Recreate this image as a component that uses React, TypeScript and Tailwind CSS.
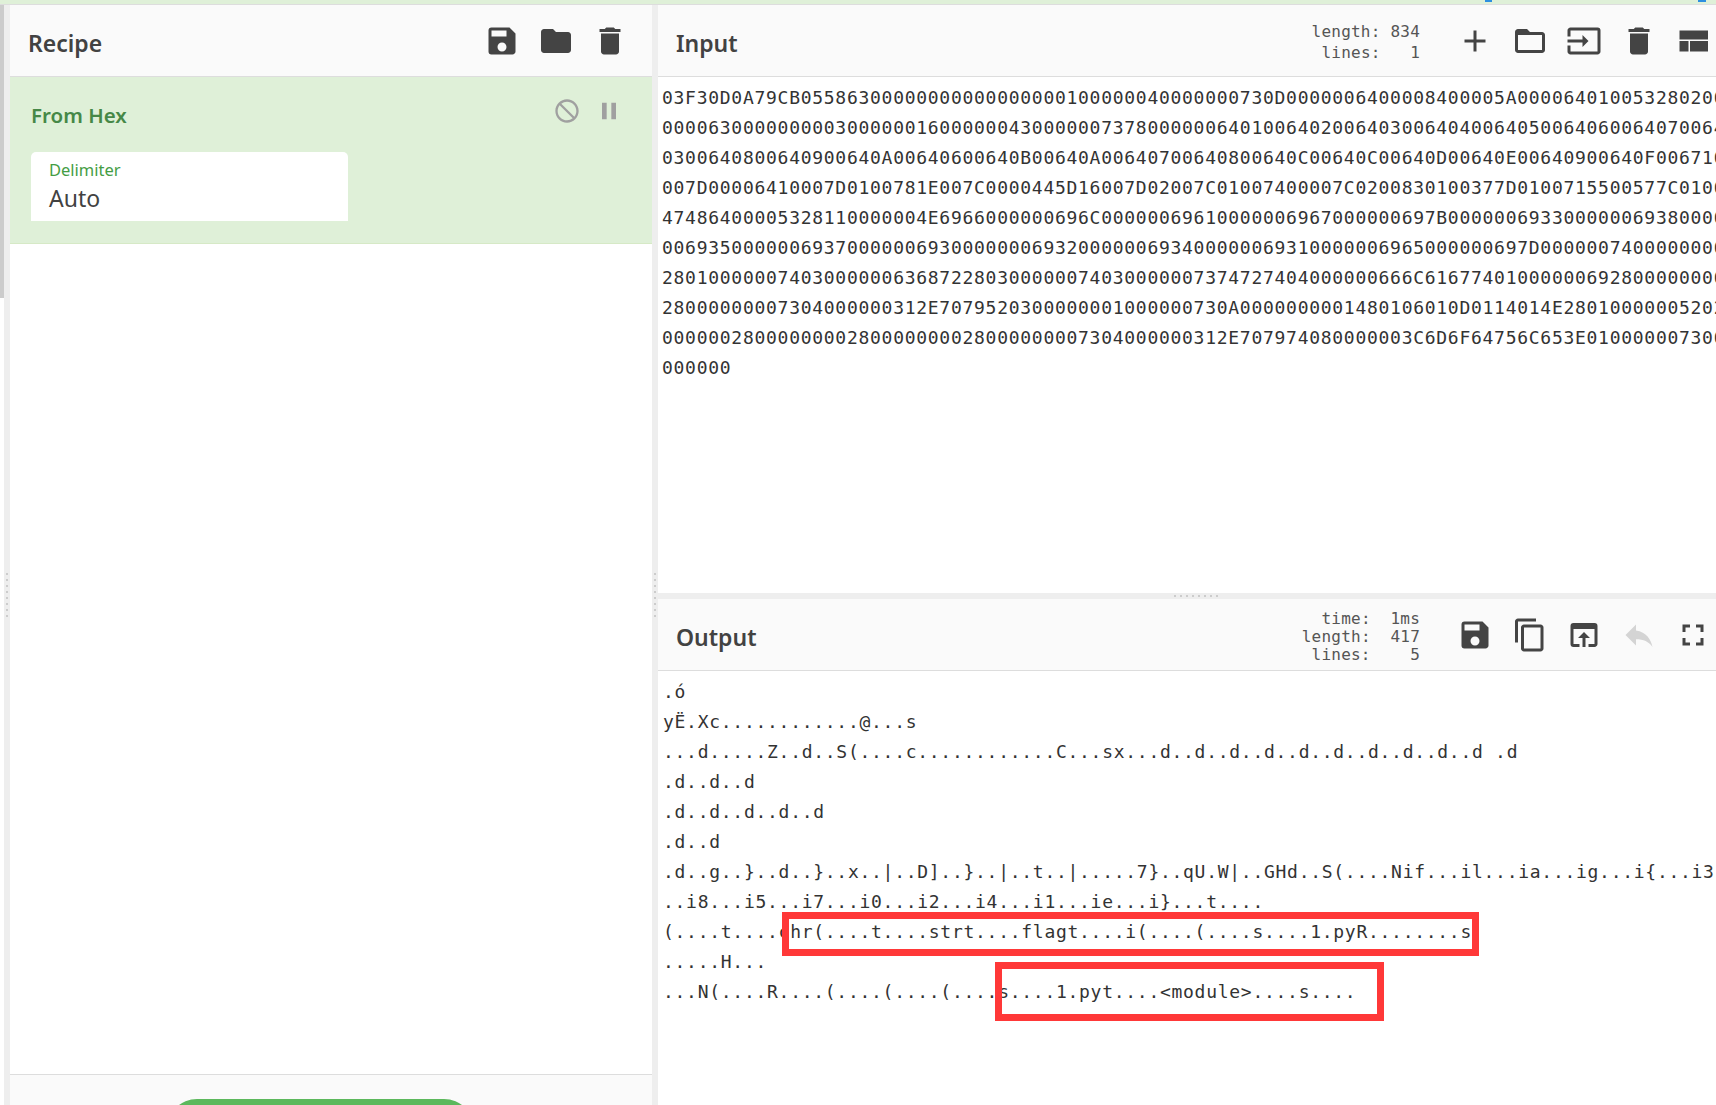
import React from 'react';
import {
  MdSave,
  MdFolder,
  MdDelete,
  MdAdd,
  MdFolderOpen,
  MdInput,
  MdContentCopy,
  MdOpenInBrowser,
  MdReply,
  MdFullscreen,
  MdNotInterested,
  MdPause,
} from 'react-icons/md';

const inputLines = [
  '03F30D0A79CB05586300000000000000000100000040000000730D0000006400008400005A000064010053280200',
  '00006300000000030000001600000043000000737800000064010064020064030064040064050064060064070064',
  '0300640800640900640A00640600640B00640A00640700640800640C00640C00640D00640E00640900640F006710',
  '007D00006410007D0100781E007C0000445D16007D02007C01007400007C0200830100377D0100715500577C0100',
  '47486400005328110000004E6966000000696C00000069610000006967000000697B000000693300000069380000',
  '006935000000693700000069300000006932000000693400000069310000006965000000697D0000007400000000',
  '28010000007403000000636872280300000074030000007374727404000000666C61677401000000692800000000',
  '28000000007304000000312E7079520300000001000000730A0000000001480106010D0114014E28010000005202',
  '0000002800000000280000000028000000007304000000312E707974080000003C6D6F64756C653E010000007300',
  '000000',
];

const outputLines = [
  '.ó',
  'yË.Xc............@...s',
  '...d.....Z..d..S(....c............C...sx...d..d..d..d..d..d..d..d..d..d .d',
  '.d..d..d',
  '.d..d..d..d..d',
  '.d..d',
  '.d..g..}..d..}..x..|..D]..}..|..t..|.....7}..qU.W|..GHd..S(....Nif...il...ia...ig...i{...i3',
  '..i8...i5...i7...i0...i2...i4...i1...ie...i}...t....',
  '(....t....chr(....t....strt....flagt....i(....(....s....1.pyR........s',
  '.....H...',
  '...N(....R....(....(....(....s....1.pyt....<module>....s....',
];

const sans = 'font-["Noto_Sans",sans-serif]';

const Grip: React.FC<{ vertical?: boolean; className: string }> = ({ vertical, className }) => (
  <div className={`absolute flex ${vertical ? 'flex-col' : ''} gap-1 ${className}`}>
    {Array.from({ length: 8 }).map((_, i) => (
      <span key={i} className="w-0.5 h-0.5 bg-[#ccc]" />
    ))}
  </div>
);

const Title: React.FC<{ children: React.ReactNode }> = ({ children }) => (
  <h2 className={`${sans} mt-1.5 text-[23px] font-semibold text-[#424242] leading-none`}>{children}</h2>
);

// old material "view_compact" glyph, the one in react-icons has changed
const LayoutIcon = () => (
  <svg width="36" height="36" viewBox="0 0 24 24" fill="currentColor">
    <path d="M3 19h6v-7H3v7zm7 0h12v-7H10v7zM3 5v6h19V5H3z" />
  </svg>
);

export default function App() {
  return (
    <div className="relative w-[1716px] h-[1105px] overflow-hidden bg-white flex flex-col">
      <div className="h-[5px] shrink-0 bg-[#dff0d8] border-b border-[#ddd]" />

      <div className="flex flex-1 min-h-0">
        {/* left gutter */}
        <div className="relative w-2.5 shrink-0 flex">
          <div className="w-1 h-full">
            <div className="w-full h-[293px] bg-[#ccc]" />
          </div>
          <div className="flex-1 bg-[#eee]" />
          <Grip vertical className="left-1.5 top-[568px]" />
        </div>

        {/* Recipe */}
        <div className="w-[642px] shrink-0 flex flex-col">
          <div className="h-[72px] shrink-0 bg-[#fafafa] border-b border-[#ddd] flex items-center justify-between pl-[18px] pr-6">
            <Title>Recipe</Title>
            <div className="flex gap-[18px] text-[#444]">
              <MdSave size={36} />
              <MdFolder size={36} />
              <MdDelete size={36} />
            </div>
          </div>

          <div className="h-[167px] shrink-0 bg-[#dff0d8] border-b border-[#d6e9c6] px-[21px] pt-[22px]">
            <div className="flex items-start justify-between">
              <span className={`${sans} text-[20.5px] font-semibold text-[#468847] leading-8`}>From Hex</span>
              <div className="flex gap-[14px] text-[#a0a0a0] mt-[-2px] mr-2">
                <MdNotInterested size={28} />
                <MdPause size={28} />
              </div>
            </div>
            <div className={`${sans} mt-[21px] w-[317px] h-[69px] bg-white rounded-t-[5px] px-[18px] pt-2`}>
              <div className="text-[16.5px] leading-5 text-[#449d44]">Delimiter</div>
              <div className="text-[23px] leading-8 mt-0.5 text-[#424242]">Auto</div>
            </div>
          </div>

          <div className="flex-1" />

          <div className="h-[31px] shrink-0 bg-[#fafafa] border-t border-[#ddd] overflow-hidden relative">
            <div className="mt-6 ml-[157px] w-[307px] h-[60px] rounded-[30px] bg-[#5cb85c]" />
          </div>
        </div>

        {/* gutter */}
        <div className="relative w-1.5 shrink-0 bg-[#eee]">
          <Grip vertical className="left-0.5 top-[568px]" />
        </div>

        {/* Input and output */}
        <div className="flex-1 min-w-0 flex flex-col">
          <section className="h-[588px] shrink-0 flex flex-col">
            <div className="h-[72px] shrink-0 bg-[#fafafa] border-b border-[#ddd] flex items-center justify-between pl-[18px] pr-[5px]">
              <Title>Input</Title>
              <div className="flex items-center">
                <pre className="font-['DejaVu_Sans_Mono',monospace] text-[16px] tracking-[0.22px] leading-[21px] text-[#555] text-right mr-[37px] mt-0.5">
                  {'length: 834\nlines:   1'}
                </pre>
                <div className="flex gap-[18.5px] text-[#444]">
                  <MdAdd size={36} />
                  <MdFolderOpen size={36} />
                  <MdInput size={36} />
                  <MdDelete size={36} />
                  <LayoutIcon />
                </div>
              </div>
            </div>
            <pre className="flex-1 overflow-hidden pl-1 pt-1.5 font-['DejaVu_Sans_Mono',monospace] text-[18px] tracking-[0.72px] leading-[30px] text-[#333]">
              {inputLines.join('\n')}
            </pre>
          </section>

          <div className="relative h-1.5 shrink-0 bg-[#eee]">
            <Grip className="left-[516px] top-0.5" />
          </div>

          <section className="flex-1 min-h-0 flex flex-col">
            <div className="h-[72px] shrink-0 bg-[#fafafa] border-b border-[#ddd] flex items-center justify-between pl-[18px] pr-[5px]">
              <Title>Output</Title>
              <div className="flex items-center">
                <pre className="font-['DejaVu_Sans_Mono',monospace] text-[16px] tracking-[0.22px] leading-[18px] text-[#555] text-right mr-[37px] mt-1">
                  {'time:  1ms\nlength:  417\nlines:    5'}
                </pre>
                <div className="flex gap-[18.5px] text-[#444]">
                  <MdSave size={36} />
                  <MdContentCopy size={36} />
                  <MdOpenInBrowser size={36} />
                  <MdReply size={36} className="text-[#d4d4d4]" />
                  <MdFullscreen size={36} />
                </div>
              </div>
            </div>
            <pre className="flex-1 overflow-hidden pl-[5px] pt-1.5 font-['DejaVu_Sans_Mono',monospace] text-[18px] tracking-[0.72px] leading-[30px] text-[#333]">
              {outputLines.join('\n')}
            </pre>
          </section>
        </div>
      </div>

      {/* specks of the page behind, at the top edge */}
      <div className="absolute left-[1485px] top-0 w-[7px] h-[2px] bg-[#2d8fe0]" />
      <div className="absolute left-[1698px] top-0 w-[8px] h-[2px] bg-[#2d8fe0]" />

      {/* annotation boxes drawn over the screenshot */}
      <div className="absolute left-[782px] top-[912px] w-[697px] h-[44px] border-[7px] border-[#ff3838]" />
      <div className="absolute left-[995px] top-[962px] w-[389px] h-[59px] border-[7px] border-[#ff3838]" />
    </div>
  );
}
